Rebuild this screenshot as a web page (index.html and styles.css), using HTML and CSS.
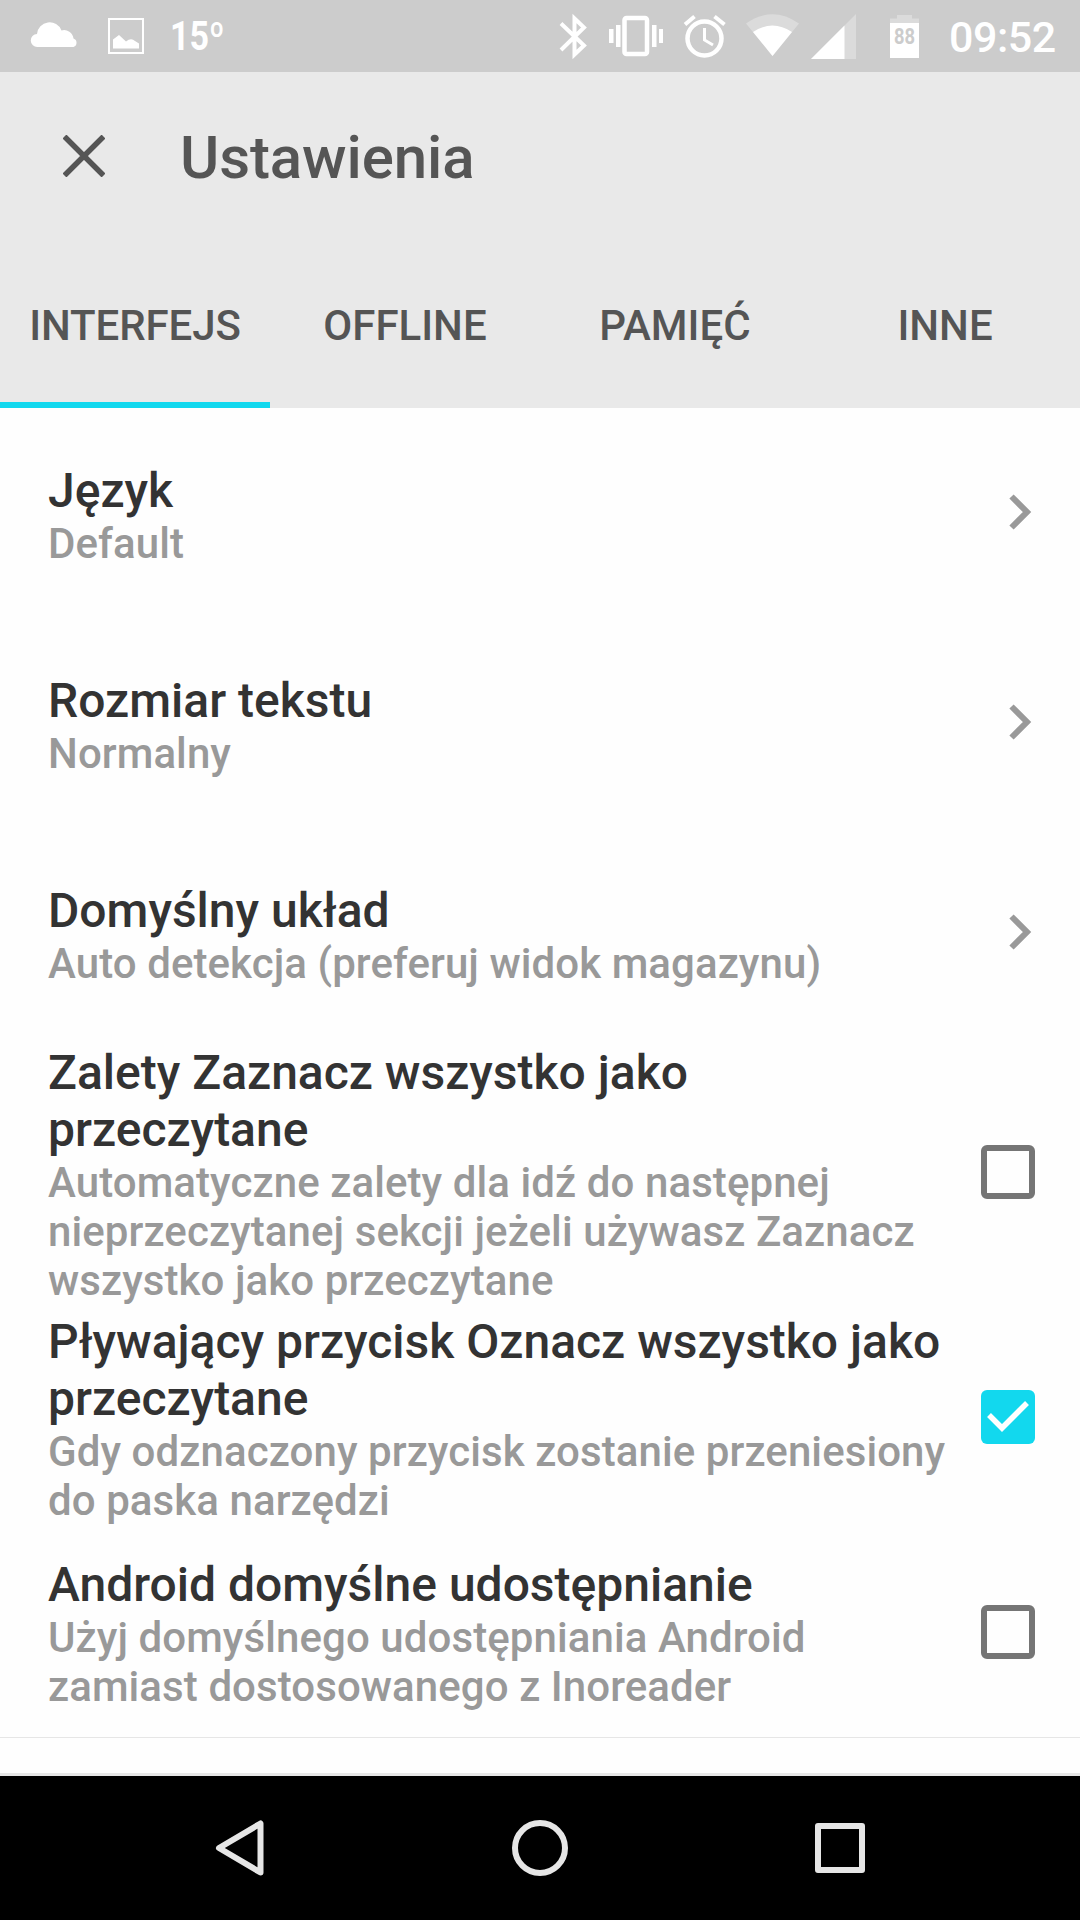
FILE: index.html
```html
<!DOCTYPE html>
<html lang="pl">
<head>
<meta charset="utf-8">
<title>Ustawienia</title>
<link rel="stylesheet" href="styles.css">
</head>
<body>
<div class="screen">
  <div class="status">
    <svg class="status-icons" viewBox="0 0 160 72" width="160" height="72" fill="#fff">
      <path d="M37.500 47a6.500 6.500 0 0 1-.5-13A12.700 12.700 0 0 1 61.500 30.500A9.500 9.500 0 0 1 73.500 38.500A4.500 4.500 0 0 1 73.500 47z"/>
      <rect x="109" y="19" width="34" height="34" fill="none" stroke="#fff" stroke-width="2"/>
      <path d="M113 48.500V39.500L119 35l7 6.500q5-4 9-.5l4 2.500v5z"/>
    </svg>
    <span class="temp">15<span class="deg">º</span></span>
    <svg class="status-icons system" viewBox="540 0 400 72" width="400" height="72" fill="#fff">
      <path d="M561 23.500L584 45.500L574.500 54.500V18.500L584 27.500L561 50" fill="none" stroke="#fff" stroke-width="4"/>
      <rect x="624.500" y="18" width="22.500" height="36" rx="2" fill="none" stroke="#fff" stroke-width="4.500"/>
      <path d="M609 29h4.500v14H609zM616 25h4.500v22H616zM652 25h4.500v22H652zM659 29h4v14h-4z"/>
      <circle cx="704.500" cy="38.500" r="17" fill="none" stroke="#fff" stroke-width="4.500"/>
      <path d="M704.500 28v12l8.500 5" fill="none" stroke="#fff" stroke-width="3"/>
      <path d="M685 24.500l9.500-8M714.500 16.500l10 8" fill="none" stroke="#fff" stroke-width="4"/>
      <path d="M746 23.500Q772.500 5 799 23.500L772.500 56z" opacity=".3"/>
      <path d="M753 32Q772.500 19 792 32L772.500 56z"/>
      <path d="M811 59L856 14V59z" opacity=".3"/>
      <path d="M811 59L844.500 25.500V59z"/>
      <path d="M897 15h15v3.500h7V23h-29v-4.500h7z" opacity=".3"/>
      <rect x="890" y="23" width="29" height="35"/>
      <text class="battery-level" x="894" y="44" textLength="21" lengthAdjust="spacingAndGlyphs">88</text>
    </svg>
    <span class="clock">09:52</span>
  </div>

  <header class="header">
    <div class="toolbar">
      <svg class="close" viewBox="0 0 42 42" width="42" height="42"><path d="M1.500 1.500L40.500 40.500M40.500 1.500L1.500 40.500" stroke="#555" stroke-width="5.500"/></svg>
      <h1 class="title">Ustawienia</h1>
    </div>
    <nav class="tabs">
      <div class="tab active">INTERFEJS</div>
      <div class="tab">OFFLINE</div>
      <div class="tab">PAMIĘĆ</div>
      <div class="tab">INNE</div>
    </nav>
  </header>

  <main class="list">
    <div class="item">
      <div class="text"><div class="name">Język</div><div class="desc">Default</div></div>
      <svg class="chevron" viewBox="0 0 24 36" width="24" height="36"><path d="M2.500 2.500L18 18L2.500 33.500"/></svg>
    </div>
    <div class="item">
      <div class="text"><div class="name">Rozmiar tekstu</div><div class="desc">Normalny</div></div>
      <svg class="chevron" viewBox="0 0 24 36" width="24" height="36"><path d="M2.500 2.500L18 18L2.500 33.500"/></svg>
    </div>
    <div class="item">
      <div class="text"><div class="name">Domyślny układ</div><div class="desc">Auto detekcja (preferuj widok magazynu)</div></div>
      <svg class="chevron" viewBox="0 0 24 36" width="24" height="36"><path d="M2.500 2.500L18 18L2.500 33.500"/></svg>
    </div>
    <div class="item">
      <div class="text"><div class="name">Zalety Zaznacz wszystko jako przeczytane</div><div class="desc">Automatyczne zalety dla idź do następnej nieprzeczytanej sekcji jeżeli używasz Zaznacz wszystko jako przeczytane</div></div>
      <div class="checkbox raised"></div>
    </div>
    <div class="item">
      <div class="text"><div class="name">Pływający przycisk Oznacz wszystko jako przeczytane</div><div class="desc">Gdy odznaczony przycisk zostanie przeniesiony do paska narzędzi</div></div>
      <div class="checkbox checked"><svg viewBox="0 0 54 54" width="54" height="54"><path d="M8 25L21 38L46 13" fill="none" stroke="#fff" stroke-width="5.500"/></svg></div>
    </div>
    <div class="item">
      <div class="text compact"><div class="name">Android domyślne udostępnianie</div><div class="desc">Użyj domyślnego udostępniania Android zamiast dostosowanego z Inoreader</div></div>
      <div class="checkbox"></div>
    </div>
    <div class="next"></div>
  </main>

  <div class="navbar">
    <svg viewBox="0 0 1080 144" width="1080" height="144" fill="none" stroke="#e6e6e6" stroke-width="6" stroke-linejoin="round">
      <path d="M260.500 47.500V96.500L219 72z"/>
      <circle cx="540" cy="72" r="25"/>
      <rect x="818" y="50" width="44" height="44"/>
    </svg>
  </div>
</div>
</body>
</html>
```

FILE: styles.css
```css
* { box-sizing: border-box; }
body { margin: 0; background: #fff; font-family: Roboto, sans-serif; font-weight: 500; }
.screen { width: 1080px; height: 1920px; display: flex; flex-direction: column; overflow: hidden; }
svg { display: block; flex: none; }

.status { height: 72px; background: #ccc; color: #fff; display: flex; align-items: center; }
.temp { width: 80px; margin-left: 10px; padding-top: 2px; font-size: 40px; font-weight: 700; line-height: 72px; white-space: nowrap; transform: scaleX(.85); transform-origin: left; }
.system { margin-left: auto; }
.clock { width: 140px; padding: 2px 0 0 9px; font-size: 43px; line-height: 72px; letter-spacing: -.5px; }
.battery-level { font-size: 22px; font-weight: 700; fill: #ccc; }

.header { height: 336px; background: #e9e9e9; color: #555; display: flex; flex-direction: column; justify-content: space-between; }
.toolbar { height: 168px; display: flex; align-items: center; padding-left: 63px; }
.title { margin: 4px 0 0 75px; font-size: 60px; line-height: 70px; font-weight: 500; letter-spacing: -.1px; }
.tabs { height: 168px; display: grid; grid-template-columns: repeat(4, 1fr); }
.tab { font-size: 42px; line-height: 49px; padding-top: 61px; text-align: center; border-bottom: 6px solid transparent; }
.active { border-color: #12d8ee; letter-spacing: -.1px; }

.list { flex: 1; display: flex; flex-direction: column; background: #fefefe; }
.item { min-height: 210px; flex: none; display: flex; align-items: center; justify-content: space-between; padding: 0 45px 0 48px; }
.text { width: 903px; padding: 6px 0 2px; }
.compact { padding-bottom: 3px; }
.name { font-size: 48px; line-height: 57px; color: #333; }
.desc { font-size: 42px; line-height: 49px; letter-spacing: .08px; color: #999; }
.chevron { margin: 0 2px 2px 0; fill: none; stroke: #999; stroke-width: 6; }
.checkbox { width: 54px; height: 54px; flex: none; border: 6px solid #757575; border-radius: 6px; }
.checked { border: 0; background: #12d8ee; }
.raised { margin-bottom: 1px; }
.next { flex: 1; border-top: 1px solid #e6e6e6; border-bottom: 3px solid #e6e6e6; }

.navbar { height: 144px; flex: none; background: #000; }
```
